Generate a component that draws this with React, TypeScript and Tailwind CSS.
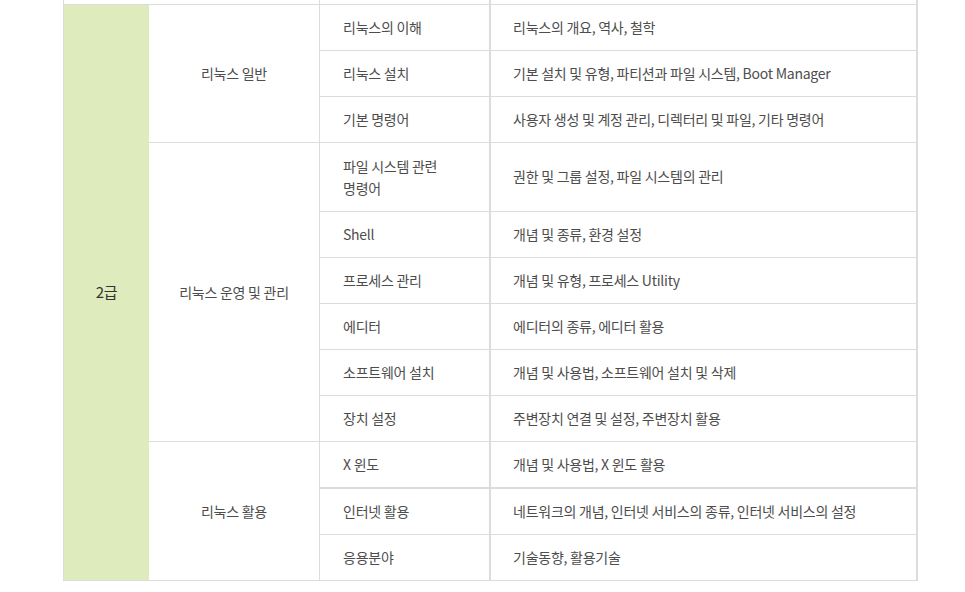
import React from 'react';

type Row = { topic: string; detail: string; tall?: boolean; thick?: boolean };
type Group = { name: string; rows: Row[] };

const groups: Group[] = [
  {
    name: '리눅스 일반',
    rows: [
      { topic: '리눅스의 이해', detail: '리눅스의 개요, 역사, 철학' },
      { topic: '리눅스 설치', detail: '기본 설치 및 유형, 파티션과 파일 시스템, Boot Manager' },
      { topic: '기본 명령어', detail: '사용자 생성 및 계정 관리, 디렉터리 및 파일, 기타 명령어' },
    ],
  },
  {
    name: '리눅스 운영 및 관리',
    rows: [
      { topic: '파일 시스템 관련\n명령어', detail: '권한 및 그룹 설정, 파일 시스템의 관리', tall: true },
      { topic: 'Shell', detail: '개념 및 종류, 환경 설정' },
      { topic: '프로세스 관리', detail: '개념 및 유형, 프로세스 Utility' },
      { topic: '에디터', detail: '에디터의 종류, 에디터 활용' },
      { topic: '소프트웨어 설치', detail: '개념 및 사용법, 소프트웨어 설치 및 삭제' },
      { topic: '장치 설정', detail: '주변장치 연결 및 설정, 주변장치 활용' },
    ],
  },
  {
    name: '리눅스 활용',
    rows: [
      { topic: 'X 윈도', detail: '개념 및 사용법, X 윈도 활용', thick: true },
      { topic: '인터넷 활용', detail: '네트워크의 개념, 인터넷 서비스의 종류, 인터넷 서비스의 설정' },
      { topic: '응용분야', detail: '기술동향, 활용기술' },
    ],
  },
];

const total = groups.reduce((n, g) => n + g.rows.length, 0);

export default function App() {
  return (
    <div
      className="w-[965px] h-[592px] bg-white pl-[63px] text-[14px] tracking-[-0.25px] text-[#4d4d4d]"
      style={{ fontFamily: '"Noto Sans CJK KR", "Noto Sans", sans-serif' }}
    >
      <table className="table-fixed border-separate border-spacing-0 w-[855px]">
        <colgroup>
          <col className="w-[86px]" />
          <col className="w-[171px]" />
          <col className="w-[171px]" />
          <col className="w-[427px]" />
        </colgroup>
        <tbody>
          <tr className="h-[5px]">
            <td colSpan={2} className="p-0 border-l border-b border-r border-[#dcdcdc]" />
            <td className="p-0 border-b border-r-2 border-[#dcdcdc]" />
            <td className="p-0 border-b border-r-2 border-[#dcdcdc]" />
          </tr>
          {groups.map((g, gi) =>
            g.rows.map((r, ri) => (
              <tr key={`${gi}-${ri}`} className={r.tall ? 'h-[69px]' : r.thick ? 'h-[47px]' : 'h-[46px]'}>
                {gi === 0 && ri === 0 && (
                  <td
                    rowSpan={total}
                    className="p-0 bg-[#ddebbd] border-l border-b border-[#dcdcdc] text-center text-[15px] text-[#333]"
                  >
                    2급
                  </td>
                )}
                {ri === 0 && (
                  <td rowSpan={g.rows.length} className="p-0 border-b border-r border-[#dcdcdc] text-center">
                    {g.name}
                  </td>
                )}
                <td
                  className={`p-0 pl-[23px] pb-px leading-[22px] whitespace-pre-line border-r-2 border-[#dcdcdc] ${
                    r.thick ? 'border-b-2' : 'border-b'
                  }`}
                >
                  {r.topic}
                </td>
                <td
                  className={`p-0 pl-[22px] pb-px border-r-2 border-[#dcdcdc] ${r.thick ? 'border-b-2' : 'border-b'}`}
                >
                  {r.detail}
                </td>
              </tr>
            ))
          )}
        </tbody>
      </table>
    </div>
  );
}
